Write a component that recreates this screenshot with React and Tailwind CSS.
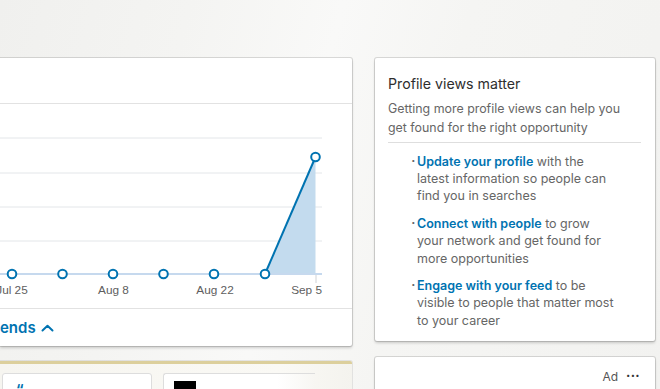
import React from "react";

const xs = [12, 62.5, 113, 163.5, 214, 265, 315.5];

function Chart() {
  const base = 170;
  return (
    <svg width="352" height="205" viewBox="0 0 352 205" className="block">
      {[34, 69, 103, 137].map((y) => (
        <line key={y} x1="0" x2="322" y1={y} y2={y} stroke="#e3e6e9" strokeWidth="1" />
      ))}
      <line x1="316" x2="316" y1={base} y2={base + 9} stroke="#d0d3d6" strokeWidth="1" />
      <polygon points={`265,${base} 315.5,53 315.5,${base}`} fill="#c3dbee" />
      <line x1="0" x2="322" y1={base} y2={base} stroke="#c6d9ee" strokeWidth="2" />
      <line x1="265" y1={base} x2="315.5" y2="53" stroke="#0073b1" strokeWidth="2" />
      {xs.map((x, i) => (
        <circle key={i} cx={x} cy={i === 6 ? 53 : base} r="4.3" fill="#fff" stroke="#0073b1" strokeWidth="2" />
      ))}
      <g fontFamily="'Liberation Sans', Arial, sans-serif" fontSize="11.8" fill="#5e5e5e">
        <text x="12" y="190" textAnchor="middle">Jul 25</text>
        <text x="113.5" y="190" textAnchor="middle">Aug 8</text>
        <text x="215" y="190" textAnchor="middle">Aug 22</text>
        <text x="322" y="190" textAnchor="end">Sep 5</text>
      </g>
    </svg>
  );
}

const card =
  "bg-white rounded-[2px] shadow-[0_0_0_1px_rgba(0,0,0,0.13),0_2px_3px_rgba(0,0,0,0.18)]";

function Bullet({ link, lines }) {
  return (
    <div className="flex">
      <span className="w-[6px] text-[#666] leading-[17px]">·</span>
      <p className="text-[12.5px] leading-[17.2px] text-[#666]">
        <span className="font-semibold text-[#0073b1]">{link}</span> {lines[0]}
        {lines.slice(1).map((l, i) => (
          <React.Fragment key={i}>
            <br />
            {l}
          </React.Fragment>
        ))}
      </p>
    </div>
  );
}

export default function App() {
  return (
    <div
      className="w-[660px] h-[389px] overflow-hidden bg-[linear-gradient(105deg,#f0f0ee_0%,#f4f4f2_25%,#f9f9f8_45%,#f5f5f3_62%,#f2f2f0_100%)]"
      style={{ fontFamily: "Inter, 'Noto Sans', sans-serif" }}
    >
      <div className="flex pt-[58px]">
        {/* left column */}
        <div className="w-[352px] flex flex-col gap-[15px]">
          <div className={`${card} h-[288px] rounded-l-none flex flex-col`}>
            <div className="h-[46px] border-b border-[#e2e2e2]" />
            <div className="h-[205px] border-b border-[#e2e2e2]">
              <Chart />
            </div>
            <div className="flex-1 flex items-center gap-[5px]">
              <span className="text-[15px] font-semibold text-[#0073b1] leading-none">ends</span>
              <svg width="13" height="8" viewBox="0 0 13 8" className="mt-[1px]">
                <path d="M1.5 6.5 L6.5 1.8 L11.5 6.5" fill="none" stroke="#0073b1" strokeWidth="2" strokeLinecap="round" strokeLinejoin="round" />
              </svg>
            </div>
          </div>
          <div className="h-[40px] rounded-tr-[2px] bg-[linear-gradient(90deg,#f6f5f0,#faf9f5_80%,#f4f3ee)] border-t-[3px] border-[#dccf9c] shadow-[0_0_0_1px_rgba(0,0,0,0.08)] flex gap-[11px] pt-[9px] pl-[2px]">
            <div className="w-[150px] h-[30px] bg-white border border-[#ddd] rounded-[3px] pl-[13px] pt-[9px]">
              <span className="block text-[#0073b1] text-[14px] font-bold leading-none">“</span>
            </div>
            <div className="w-[152px] h-[30px] bg-[linear-gradient(90deg,#fff_75%,#f7f6f2)] border border-[#ddd] border-r-0 rounded-l-[3px] pl-[10px] pt-[7px]">
              <div className="w-[22px] h-[20px] bg-black" />
            </div>
            <span className="text-[#555] text-[16px] leading-none pt-[14px]">›</span>
          </div>
        </div>

        {/* right column */}
        <div className="ml-[23px] w-[280px] flex flex-col gap-[16px]">
          <div className={`${card} h-[283px] px-[13px] pt-[17px]`}>
            <h2 className="text-[14.2px] text-[#2e2e2e] leading-[18px]">Profile views matter</h2>
            <p className="mt-[7px] text-[12.4px] leading-[18.5px] text-[#666]">
              Getting more profile views can help you
              <br />
              get found for the right opportunity
            </p>
            <div className="mt-[5px] mr-[1px] border-t border-[#dedede]" />
            <div className="pl-[23px] pt-[10px] flex flex-col gap-[10.5px]">
              <Bullet
                link="Update your profile"
                lines={["with the", "latest information so people can", "find you in searches"]}
              />
              <Bullet
                link="Connect with people"
                lines={["to grow", "your network and get found for", "more opportunities"]}
              />
              <Bullet
                link="Engage with your feed"
                lines={["to be", "visible to people that matter most", "to your career"]}
              />
            </div>
          </div>
          <div className={`${card} h-[60px] flex justify-end items-start pt-[12px] pr-[15px] gap-[8px]`}>
            <span className="text-[12px] text-[#555] leading-[16px]">Ad</span>
            <span className="text-[13px] text-[#333] leading-[12px] font-bold tracking-[0.3px]">···</span>
          </div>
        </div>
      </div>
    </div>
  );
}
